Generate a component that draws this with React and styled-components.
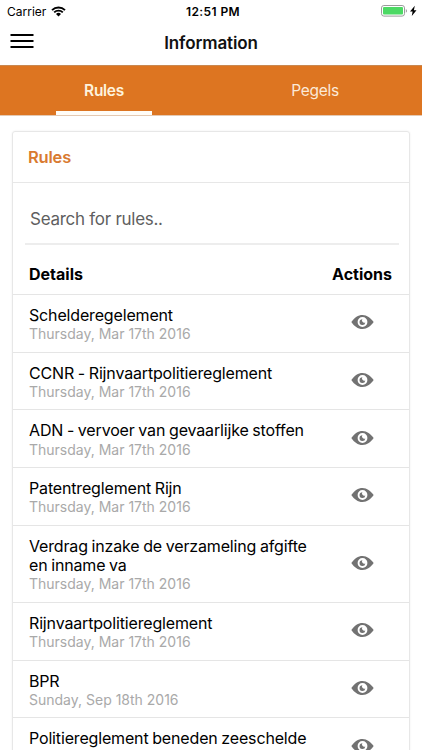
import React from 'react';
import styled, { createGlobalStyle } from 'styled-components';

const rules = [
    { title: 'Schelderegelement', date: 'Thursday, Mar 17th 2016' },
    { title: 'CCNR - Rijnvaartpolitiereglement', date: 'Thursday, Mar 17th 2016' },
    { title: 'ADN - vervoer van gevaarlijke stoffen', date: 'Thursday, Mar 17th 2016' },
    { title: 'Patentreglement Rijn', date: 'Thursday, Mar 17th 2016' },
    { title: 'Verdrag inzake de verzameling afgifte en inname va', date: 'Thursday, Mar 17th 2016' },
    { title: 'Rijnvaartpolitiereglement', date: 'Thursday, Mar 17th 2016' },
    { title: 'BPR', date: 'Sunday, Sep 18th 2016' },
    { title: 'Politiereglement beneden zeeschelde', date: 'Thursday, Mar 17th 2016' },
];

export default function App() {
    return (
        <Screen>
            <GlobalStyle />
            <StatusBar>
                <Carrier>Carrier <WifiIcon /></Carrier>
                <Clock>12:51 PM</Clock>
                <Power><BatteryIcon /></Power>
            </StatusBar>
            <Header>
                <MenuButton aria-label="Menu"><MenuIcon /></MenuButton>
                <Title>Information</Title>
            </Header>
            <Tabs>
                <Tab $active><span>Rules</span></Tab>
                <Tab><span>Pegels</span></Tab>
            </Tabs>
            <Content>
                <Card>
                    <CardTitle>Rules</CardTitle>
                    <Search placeholder="Search for rules.." />
                    <TableHead>
                        <span>Details</span>
                        <span>Actions</span>
                    </TableHead>
                    {rules.map((rule) => (
                        <Row key={rule.title}>
                            <div>
                                <RuleTitle>{rule.title}</RuleTitle>
                                <RuleDate>{rule.date}</RuleDate>
                            </div>
                            <ViewButton aria-label="View"><EyeIcon /></ViewButton>
                        </Row>
                    ))}
                </Card>
            </Content>
        </Screen>
    )
}

function WifiIcon() {
    return (
        <svg width="15" height="11" viewBox="0 0 15 11">
            <path d="M1 4.1a9.3 9.3 0 0 1 13 0M3.2 6.4a6.1 6.1 0 0 1 8.6 0" fill="none" stroke="#000" strokeWidth="1.9" />
            <path d="M7.5 10.5 5 8a3.6 3.6 0 0 1 5 0z" fill="#000" />
        </svg>
    )
}

function BatteryIcon() {
    return (
        <svg width="37" height="12" viewBox="0 0 37 12">
            <rect x="0.5" y="0.5" width="23" height="10.6" rx="2.4" fill="#fff" stroke="#9b9b9b" />
            <rect x="2" y="2" width="20" height="7.6" rx="1" fill="#4cd964" />
            <path d="M24.8 4v3.7q1.2-.5 1.2-1.8t-1.2-1.9z" fill="#9b9b9b" />
            <path d="M33.8.8 29 6.4h2.6l-.8 4.6 4.7-5.8h-2.6z" fill="#000" />
        </svg>
    )
}

function MenuIcon() {
    return (
        <svg width="24" height="16" viewBox="0 0 24 16">
            <path d="M.5 2h23M.5 8h23M.5 14h23" stroke="#000" strokeWidth="2" />
        </svg>
    )
}

function EyeIcon() {
    return (
        <svg width="23" height="14" viewBox="0 0 23 14">
            <path
                d="M11.5 0C7 0 3.800 2.400.3 7c3 4.300 6.400 7 11.200 7s8.200-2.900 11.200-7C19.500 2.900 16 0 11.500 0zm0 11.900a4.900 4.900 0 1 1 0-9.800 4.900 4.900 0 0 1 0 9.800z"
                fill="#727272"
                fillRule="evenodd"
            />
            <path d="M11.700 7a2 2 0 0 1-.3-2.800 2.900 2.900 0 1 0 2.900 3.200c-.9.500-2 .4-2.600-.4z" fill="#727272" />
        </svg>
    )
}

const GlobalStyle = createGlobalStyle`
    * {
        box-sizing: border-box;
    }

    body {
        margin: 0;
        background: #fff;
        font-family: Inter, "Liberation Sans", sans-serif;
    }
`;

const Screen = styled.div`
    display: flex;
    flex-direction: column;
    height: 750px;
    overflow: hidden;
    color: #000;
`;

const StatusBar = styled.div`
    display: grid;
    grid-template-columns: 1fr auto 1fr;
    align-items: center;
    flex: none;
    height: 22px;
    padding: 0 4px 0 7px;
`;

const Carrier = styled.div`
    display: flex;
    align-items: center;
    gap: 5px;
    font-size: 12px;
`;

const Clock = styled.div`
    padding-left: 1px;
    font-size: 12px;
    font-weight: 600;
    letter-spacing: 0.4px;
`;

const Power = styled.div`
    display: flex;
    justify-content: flex-end;
`;

const Header = styled.header`
    display: grid;
    grid-template-columns: 1fr auto 1fr;
    align-items: center;
    flex: none;
    height: 43px;
    padding: 0 10px;
`;

const MenuButton = styled.button`
    display: flex;
    padding: 0 0 5px;
    border: 0;
    background: none;
`;

const Title = styled.h1`
    margin: 0;
    padding-bottom: 2px;
    font-size: 17px;
    font-weight: 600;
    line-height: 22px;
    letter-spacing: -0.1px;
    color: #111;
`;

const Tabs = styled.nav`
    display: flex;
    flex: none;
    height: 51px;
    background: #dd7521;
    border-top: 1px solid #c98850;
    border-bottom: 1px solid #e4c9b2;
`;

const Tab = styled.button`
    display: flex;
    justify-content: center;
    flex: 1;
    padding: 0 3px 0 0;
    border: 0;
    background: none;
    font-family: inherit;
    font-size: 15.5px;
    font-weight: ${ ({ $active }) => $active ? 600 : 400 };
    letter-spacing: -0.3px;
    color: ${ ({ $active }) => $active ? '#fdf3dd' : '#fbe9d8' };

    span {
        width: 96px;
        height: 49px;
        line-height: 49px;
        border-bottom: ${ ({ $active }) => $active ? '4px solid #fffdf8' : '0' };
    }
`;

const Content = styled.main`
    flex: 1;
    padding: 15px 12px 0;
    overflow: hidden;
`;

const Card = styled.section`
    border: 1px solid #e7e7e7;
    border-radius: 3px;
    box-shadow: 0 0 2px rgba(0, 0, 0, 0.08);
`;

const CardTitle = styled.h2`
    height: 51px;
    margin: 0;
    padding-left: 15px;
    border-bottom: 1px solid #e7e7e7;
    font-size: 16.5px;
    font-weight: 600;
    line-height: 50px;
    letter-spacing: -0.2px;
    color: #d97a30;
`;

const Search = styled.input`
    display: block;
    width: calc(100% - 22px);
    height: 44px;
    margin: 18px 10px 0 12px;
    padding: 0 5px 7px;
    border: 0;
    border-bottom: 2px solid #ededed;
    outline: 0;
    background: none;
    font-family: inherit;
    font-size: 17px;
    letter-spacing: -0.27px;

    &::placeholder {
        color: #5f5f5f;
        opacity: 1;
    }
`;

const TableHead = styled.div`
    display: flex;
    justify-content: space-between;
    height: 49px;
    padding: 9px 17px 0 16px;
    font-size: 16px;
    font-weight: 700;
    line-height: 40px;
`;

const Row = styled.div`
    display: grid;
    grid-template-columns: 285px 1fr;
    align-items: center;
    padding: 11px 0 9px 16px;
    border-top: 1px solid #e5e5e5;
`;

const RuleTitle = styled.div`
    font-size: 16px;
    line-height: 19.3px;
    letter-spacing: -0.16px;
    word-spacing: -0.6px;
`;

const RuleDate = styled.div`
    font-size: 14px;
    line-height: 17.4px;
    color: #a9a9a9;
`;

const ViewButton = styled.button`
    justify-self: center;
    display: flex;
    margin: 0;
    padding: 0 0 4px 1px;
    border: 0;
    background: none;
`;
